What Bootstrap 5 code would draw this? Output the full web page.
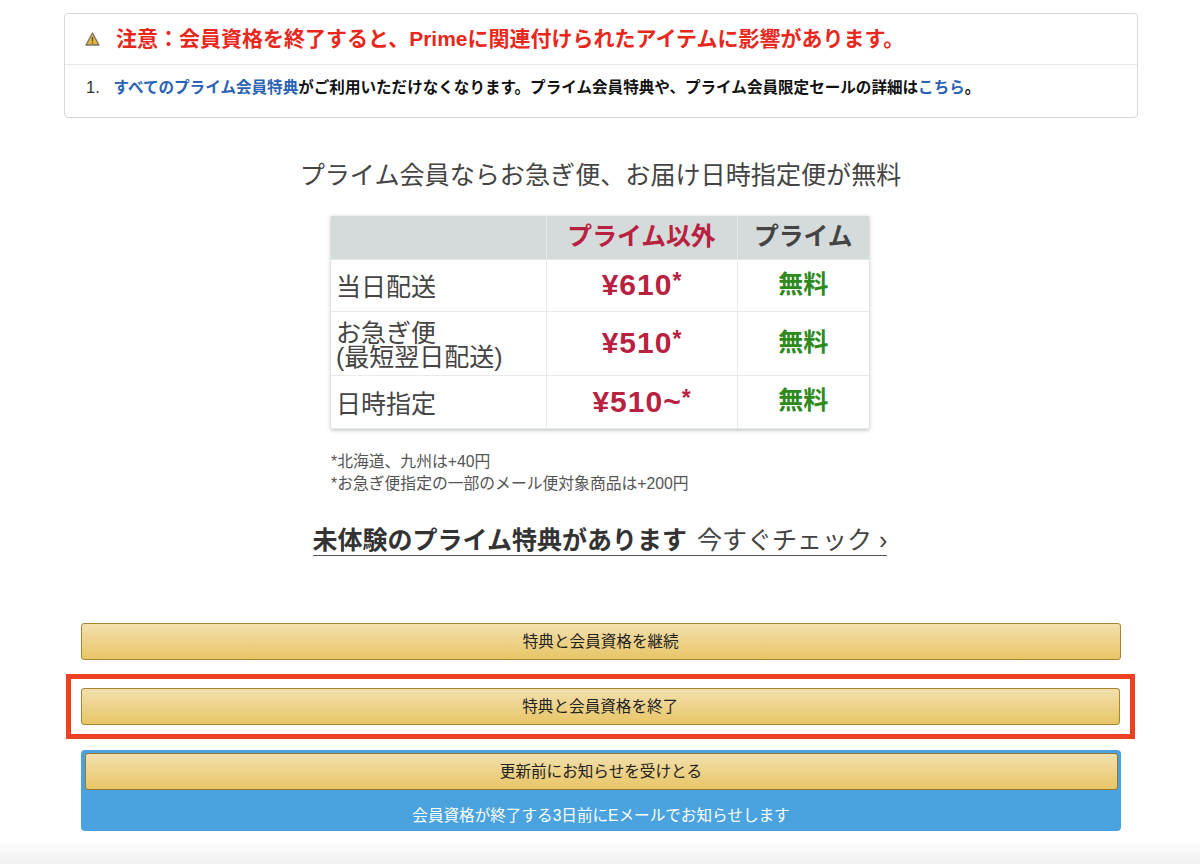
<!DOCTYPE html>
<html lang="ja">
<head>
<meta charset="utf-8">
<title>会員資格の終了</title>
<link rel="stylesheet" href="https://cdn.jsdelivr.net/npm/bootstrap@5.3.0/dist/css/bootstrap.min.css">
<style>
html,body{height:864px;overflow:hidden}
body{font-family:"Liberation Sans","Noto Sans CJK JP",sans-serif;color:#333;background:#fff;position:relative}
.pg{padding:13px 62px 0 64px;position:relative;z-index:1}
.notice{border:1px solid #d8d8d8;border-radius:4px;height:105px;--bs-card-bg:#fff}
.notice-head{height:51px;padding:0 0 0 20px;background:#fff;border-bottom:1px solid #e7e7e7;gap:16px}
.notice-title{font-size:21px;font-weight:700;color:#e8281c;line-height:1;margin-top:-2px}
.notice-body{padding:12px 0 0 21px;font-size:15.57px;font-weight:700;color:#111;line-height:20px}
.num{font-weight:400;color:#333;width:27.5px;display:inline-block;font-size:16.5px}
.notice-body a{color:#2a62b5;text-decoration:none}
.lead-line{font-size:25.1px;line-height:30px;color:#444;margin:42px 0 26px;text-align:center;padding-right:1px}
.tbl-wrap{width:538px;margin-left:267px;box-shadow:0 1px 4px rgba(70,80,80,.4)}
.cmp{table-layout:fixed;width:538px;margin:0;--bs-table-bg:#fff;border-color:#e6e9e9}
.cmp th,.cmp td{padding:0;vertical-align:middle;text-align:center;border:1px solid #e8ebeb;border-width:0 1px 1px 0}
.cmp th:last-child,.cmp td:last-child{border-right:0}
.cmp thead th{background:#d5dbdb;height:43px;font-size:24.8px;line-height:1;font-weight:700;border-color:#e4e8e8;--bs-table-bg:#d5dbdb}
.cmp tr td:first-child{text-align:left;font-size:25px;line-height:24px;color:#444;padding:4px 0 0 5px}
.cmp .r1 td{height:52px}.cmp .r2 td{height:64px}.cmp .r3 td{height:53px}
.cmp td.pr{font-size:30px;font-weight:700;color:#b8213f;padding-bottom:1px;letter-spacing:1px}
.cmp td.fr{font-size:25px;font-weight:700;color:#2f8a1e;padding-bottom:1px}
.cmp .pr i{font-size:23px;font-style:normal;vertical-align:baseline;position:relative;top:-6px;letter-spacing:0}
.red-h{color:#b8213f}.dark-h{color:#444}
.notes{margin:22px 0 0 267px;font-size:15.8px;line-height:22px;color:#555}
.cta-row{margin:31px 0 0;text-align:center;padding-right:2px}
.cta{display:inline-block;font-size:25px;line-height:29px;color:#333;text-decoration:none;border-bottom:1px solid #555}
.cta b{font-weight:700}
.cta span{font-weight:400;margin-left:10px;color:#444}
.acts{margin:67px 0 0 -64px;padding:0 0 0 81px;width:1200px}
.gold{display:block;width:1039.5px;height:37px;padding:0;font-size:15.6px;line-height:33px;color:#222;border:1px solid #a88734;border-radius:3px;background:linear-gradient(#f3e0ae,#e8c566);box-shadow:none}
.gold:hover{color:#222;border-color:#a88734}
.box-red{margin:14.5px 0 0 -15px;width:1069px;height:65px;border:5.5px solid #ee4023;padding:8.5px 0 0 9.5px}
.box-blue{margin:11px 0 0;width:1039.5px;height:81px;background:#4aa3de;border-radius:4px;padding:3px 3px 0 3.5px;color:#fff;text-align:center;font-size:15.6px}
.box-blue .gold{width:100%;border-color:#96772e}
.box-blue p{margin:16px 0 0;line-height:20px}
.foot-fade{position:absolute;left:0;right:0;bottom:0;height:24px;background:linear-gradient(#fff,#efefef)}
</style>
</head>
<body>
<div class="foot-fade"></div>
<div class="pg">
  <div class="card notice">
    <div class="card-header d-flex align-items-center notice-head">
      <svg width="15" height="14" viewBox="0 0 15 14" aria-hidden="true"><path d="M7.5 1 14 13H1Z" fill="#e3b53a" stroke="#77726a" stroke-width="1.3" stroke-linejoin="round"/><path d="M7.5 5v4.2M7.5 10.3v1.2" stroke="#443" stroke-width="1.2"/></svg>
      <span class="notice-title">注意：会員資格を終了すると、Primeに関連付けられたアイテムに影響があります。</span>
    </div>
    <div class="card-body notice-body">
      <span class="num">1.</span><a href="#">すべてのプライム会員特典</a>がご利用いただけなくなります。プライム会員特典や、プライム会員限定セールの詳細は<a href="#">こちら</a>。
    </div>
  </div>
  <p class="lead-line">プライム会員ならお急ぎ便、お届け日時指定便が無料</p>
  <div class="tbl-wrap">
    <table class="table cmp">
      <colgroup><col style="width:215px"><col style="width:191px"><col style="width:132px"></colgroup>
      <thead><tr><th></th><th class="red-h">プライム以外</th><th class="dark-h">プライム</th></tr></thead>
      <tbody>
        <tr class="r1"><td>当日配送</td><td class="pr">¥610<i>*</i></td><td class="fr">無料</td></tr>
        <tr class="r2"><td>お急ぎ便<br>(最短翌日配送)</td><td class="pr">¥510<i>*</i></td><td class="fr">無料</td></tr>
        <tr class="r3"><td>日時指定</td><td class="pr">¥510~<i>*</i></td><td class="fr">無料</td></tr>
      </tbody>
    </table>
  </div>
  <div class="notes">*北海道、九州は+40円<br>*お急ぎ便指定の一部のメール便対象商品は+200円</div>
  <div class="cta-row"><a class="cta" href="#"><b>未体験のプライム特典があります</b><span>今すぐチェック ›</span></a></div>
  <div class="acts">
    <button type="button" class="btn gold">特典と会員資格を継続</button>
    <div class="box-red"><button type="button" class="btn gold">特典と会員資格を終了</button></div>
    <div class="box-blue">
      <button type="button" class="btn gold">更新前にお知らせを受けとる</button>
      <p>会員資格が終了する3日前にEメールでお知らせします</p>
    </div>
  </div>
</div>
</body>
</html>
